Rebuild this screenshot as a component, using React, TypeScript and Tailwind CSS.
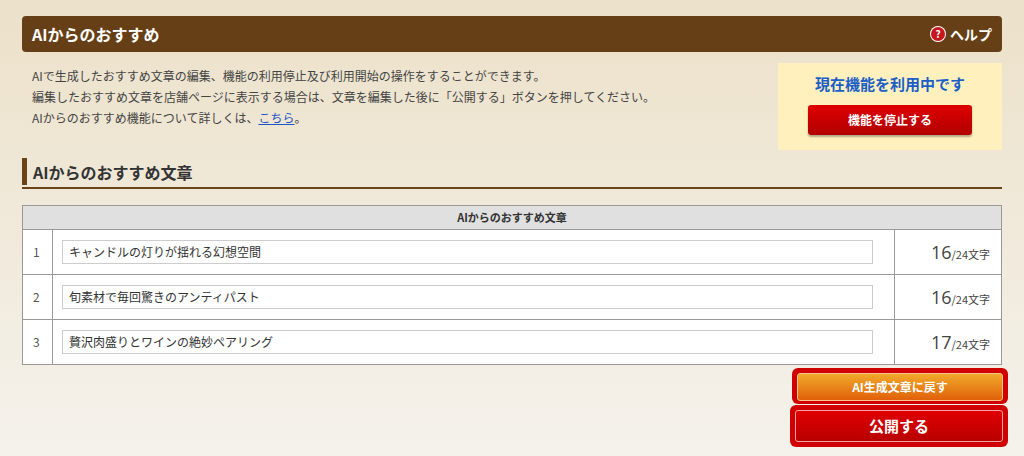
export default function App() {
  const rows = [
    ["キャンドルの灯りが揺れる幻想空間", "16"],
    ["旬素材で毎回驚きのアンティパスト", "16"],
    ["贅沢肉盛りとワインの絶妙ペアリング", "17"],
  ];
  return (
    <div className="w-[1024px] h-[456px] overflow-hidden bg-gradient-to-b from-[#ece1c9] to-[#f5f2ec] px-[22px] pt-[16px] text-[#333]" style={{ fontFamily: '"Noto Sans CJK JP", "Noto Sans", sans-serif' }}>
      <div className="h-[36px] rounded-[4px] bg-[#673f17] flex items-center justify-between px-[10px] text-white">
        <span className="text-[16px] font-bold">AIからのおすすめ</span>
        <span className="flex items-center gap-1 text-[14px] font-bold">
          <span className="w-[16px] h-[16px] rounded-full bg-white flex items-center justify-center"><span className="w-[14px] h-[14px] rounded-full bg-[#c8161d] text-white text-[10px] leading-[14px] text-center font-bold">?</span></span>
          ヘルプ
        </span>
      </div>
      <div className="flex justify-between mt-[11px]">
        <div className="pl-[10px] pt-[2px] text-[12px] leading-[21px] text-[#444]">
          <p>AIで生成したおすすめ文章の編集、機能の利用停止及び利用開始の操作をすることができます。</p>
          <p>編集したおすすめ文章を店舗ページに表示する場合は、文章を編集した後に「公開する」ボタンを押してください。</p>
          <p>AIからのおすすめ機能について詳しくは、<span className="text-[#1a55c8] underline">こちら</span>。</p>
        </div>
        <div className="w-[224px] h-[87px] bg-[#fff0bd] flex flex-col items-center pt-[10px]">
          <div className="text-[15px] font-bold text-[#1a5fc8]">現在機能を利用中です</div>
          <div className="mt-[9px] w-[164px] h-[30px] rounded-[3px] bg-gradient-to-b from-[#e00000] to-[#b00000] shadow-[0_2px_2px_rgba(0,0,0,0.3)] text-white text-[12px] font-bold flex items-center justify-center">機能を停止する</div>
        </div>
      </div>
      <div className="mt-[8px] border-b-2 border-[#6b4318] pb-[2px]">
        <div className="border-l-[5px] border-[#6b4318] pl-[6px] h-[27px] flex items-center text-[16px] font-bold">AIからのおすすめ文章</div>
      </div>
      <table className="mt-[16px] w-full border-collapse border border-[#999] bg-white text-[12px]">
        <thead>
          <tr className="h-[24px] bg-[#e0e0e0]"><th colSpan={3} className="border border-[#999] font-bold text-[11px]">AIからのおすすめ文章</th></tr>
        </thead>
        <tbody>
          {rows.map(([t, n], i) => (
            <tr key={i} className="h-[45px]">
              <td className="w-[30px] border border-[#999] pl-[10px] text-[#555]">{i + 1}</td>
              <td className="border border-[#999] px-[9px]">
                <div className="h-[24px] w-[811px] border border-[#ccc] flex items-center px-[6px] text-[12px]">{t}</div>
              </td>
              <td className="w-[107px] border border-[#999] text-right pr-[11px] text-[#444]"><span className="text-[18px] font-medium" style={{ fontFamily: '"Open Sans", sans-serif' }}>{n}</span><span className="text-[11px]">/24文字</span></td>
            </tr>
          ))}
        </tbody>
      </table>
      <div className="flex flex-col items-end mt-[3px] mr-[-6px]">
        <div className="rounded-[6px] bg-[#d00000] p-[5px] pb-[3px]">
          <div className="w-[206px] h-[28px] rounded-[3px] border border-[#f7c68a] bg-gradient-to-b from-[#f0a82a] to-[#e06008] text-white text-[12px] font-bold flex items-center justify-center">AI生成文章に戻す</div>
        </div>
        <div className="rounded-[6px] bg-[#d00000] p-[5px] mt-[1px]">
          <div className="w-[208px] h-[32px] rounded-[3px] border border-[#f3a0a0] bg-gradient-to-b from-[#e00000] to-[#b80000] text-white text-[15px] font-bold flex items-center justify-center">公開する</div>
        </div>
      </div>
    </div>
  );
}
